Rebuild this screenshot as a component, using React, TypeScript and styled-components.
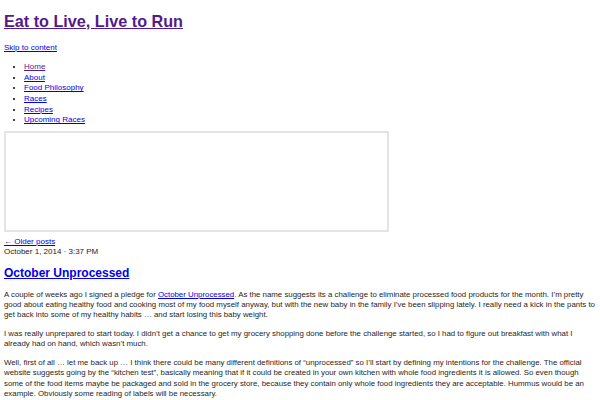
import React from "react";
import styled, { createGlobalStyle } from "styled-components";

const Global = createGlobalStyle`
  html, body { margin: 0; padding: 0; background: #fff; }
  body { font-family: "Liberation Sans", Arial, sans-serif; color: #333; }
`;

const Page = styled.div`
  padding: 0 4px;
`;

const SiteTitle = styled.h1`
  margin: 11px 0 0;
  font-size: 16.2px;
  line-height: 20px;
  font-weight: bold;
  a { color: #551a8b; }
`;

const Skip = styled.a`
  display: inline-block;
  margin-top: 11px;
  font-size: 8px;
  line-height: 11px;
  color: #0000ee;
`;

const Menu = styled.ul`
  margin: 8px 0 0;
  padding-left: 20px;
  font-size: 8px;
  line-height: 10.65px;
  list-style: disc;
  color: #000;
`;

const MenuLink = styled.a<{ $visited?: boolean }>`
  color: ${(p) => (p.$visited ? "#551a8b" : "#0000ee")};
`;

const Frame = styled.div`
  margin-top: 5px;
  width: 381px;
  height: 97px;
  border: 2px solid #e4e4e4;
`;

const Older = styled.a`
  display: block;
  margin-top: 4px;
  font-size: 8px;
  line-height: 11px;
  color: #0000ee;
`;

const Meta = styled.div`
  font-size: 8px;
  line-height: 10px;
  color: #222;
`;

const PostTitle = styled.h2`
  margin: 8.5px 0 2px;
  font-size: 12px;
  line-height: 16px;
  font-weight: bold;
  a { color: #0000ee; }
`;

const Para = styled.p`
  margin: 8.5px 0 0;
  font-size: 7.85px;
  line-height: 10.25px;
  color: #262626;
  a { color: #0000ee; }
`;

export default function App() {
  return (
    <>
      <Global />
      <Page>
        <SiteTitle>
          <a href="#">Eat to Live, Live to Run</a>
        </SiteTitle>
        <Skip href="#">Skip to content</Skip>
        <Menu>
          <li><MenuLink href="#" $visited>Home</MenuLink></li>
          <li><MenuLink href="#">About</MenuLink></li>
          <li><MenuLink href="#">Food Philosophy</MenuLink></li>
          <li><MenuLink href="#">Races</MenuLink></li>
          <li><MenuLink href="#">Recipes</MenuLink></li>
          <li><MenuLink href="#">Upcoming Races</MenuLink></li>
        </Menu>
        <Frame />
        <Older href="#">← Older posts</Older>
        <Meta>October 1, 2014 · 3:37 PM</Meta>
        <PostTitle>
          <a href="#">October Unprocessed</a>
        </PostTitle>
        <Para>
          A couple of weeks ago I signed a pledge for <a href="#">October Unprocessed</a>. As the name suggests its a challenge to eliminate processed food products for the month. I’m pretty good about eating healthy food and cooking most of my food myself anyway, but with the new baby in the family I’ve been slipping lately. I really need a kick in the pants to get back into some of my healthy habits … and start losing this baby weight.
        </Para>
        <Para>
          I was really unprepared to start today. I didn’t get a chance to get my grocery shopping done before the challenge started, so I had to figure out breakfast with what I already had on hand, which wasn’t much.
        </Para>
        <Para>
          Well, first of all … let me back up … I think there could be many different definitions of “unprocessed” so I’ll start by defining my intentions for the challenge. The official website suggests going by the “kitchen test”, basically meaning that if it could be created in your own kitchen with whole food ingredients it is allowed. So even though some of the food items maybe be packaged and sold in the grocery store, because they contain only whole food ingredients they are acceptable. Hummus would be an example. Obviously some reading of labels will be necessary.
        </Para>
      </Page>
    </>
  );
}
